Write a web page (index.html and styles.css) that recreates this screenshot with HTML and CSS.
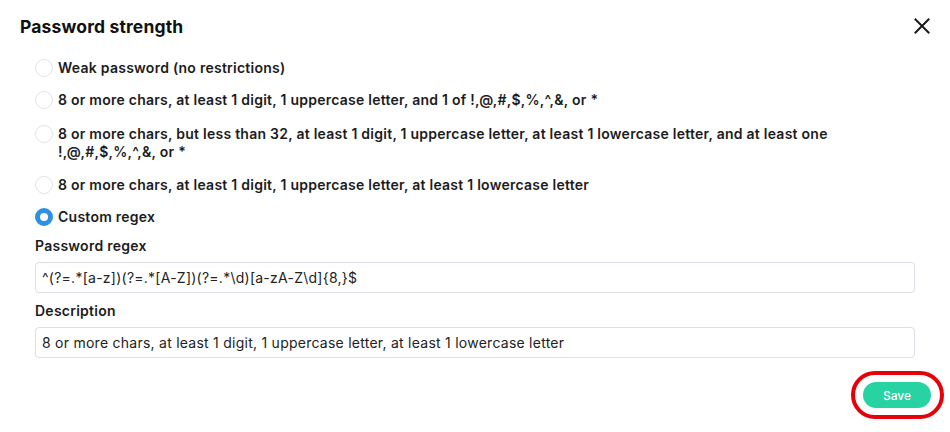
FILE: index.html
```html
<!DOCTYPE html>
<html>
<head>
<meta charset="utf-8">
<link rel="stylesheet" href="styles.css">
</head>
<body>
<div class="dialog">
  <div class="header">
    <h1 class="title">Password strength</h1>
    <button class="close" aria-label="Close">
      <svg width="16" height="16" viewBox="0 0 16 16"><path d="M1.5 1.5 L14.5 14.5 M14.5 1.5 L1.5 14.5" stroke="#1a1a1a" stroke-width="2" stroke-linecap="square"/></svg>
    </button>
  </div>
  <div class="options">
    <label class="option"><span class="radio"></span><span class="text">Weak password (no restrictions)</span></label>
    <label class="option"><span class="radio"></span><span class="text">8 or more chars, at least 1 digit, 1 uppercase letter, and 1 of !,@,#,$,%,^,&amp;, or *</span></label>
    <label class="option multi"><span class="radio"></span><span class="text">8 or more chars, but less than 32, at least 1 digit, 1 uppercase letter, at least 1 lowercase letter, and at least one !,@,#,$,%,^,&amp;, or *</span></label>
    <label class="option"><span class="radio"></span><span class="text">8 or more chars, at least 1 digit, 1 uppercase letter, at least 1 lowercase letter</span></label>
    <label class="option"><span class="radio checked"></span><span class="text">Custom regex</span></label>
  </div>
  <div class="fields">
    <div class="field">
      <div class="field-label">Password regex</div>
      <div class="input">^(?=.*[a-z])(?=.*[A-Z])(?=.*\d)[a-zA-Z\d]{8,}$</div>
    </div>
    <div class="field">
      <div class="field-label">Description</div>
      <div class="input">8 or more chars, at least 1 digit, 1 uppercase letter, at least 1 lowercase letter</div>
    </div>
  </div>
  <div class="footer">
    <div class="save-wrap">
      <button class="save">Save</button>
      <span class="highlight"></span>
    </div>
  </div>
</div>
</body>
</html>
```

FILE: styles.css
```css
* { box-sizing: border-box; }
html, body {
  margin: 0;
  padding: 0;
  background: #ffffff;
}
body {
  font-family: "Inter", "Open Sans", sans-serif;
  color: #1a1a1a;
}
.dialog {
  width: 950px;
  height: 432px;
  padding: 0 35px 0 35px;
}
.header {
  display: flex;
  justify-content: space-between;
  align-items: center;
  height: 52px;
  margin: 0 0 0 -15px;
}
.title {
  margin: 0;
  font-size: 17.5px;
  font-weight: 700;
  letter-spacing: 0.15px;
  color: #111;
}
.close {
  border: none;
  background: none;
  padding: 0;
  width: 16px;
  height: 16px;
  margin-right: -15px;
  display: flex;
}
.options {
  display: flex;
  flex-direction: column;
  gap: 14px;
  margin-top: 7px;
}
.option {
  display: flex;
  align-items: flex-start;
  gap: 5px;
  font-size: 14px;
  font-weight: 600;
  letter-spacing: 0.25px;
  line-height: 18px;
  color: #1c1c1c;
}
.option.multi {
  margin-top: 2px;
  margin-bottom: 1px;
}
.radio {
  flex: none;
  width: 18px;
  height: 18px;
  border-radius: 50%;
  border: 1px solid #e3e3ea;
  background: #fff;
}
.radio.checked {
  border: 5.5px solid #2e90e3;
  background: #fff;
}
.fields {
  display: flex;
  flex-direction: column;
  gap: 9px;
  margin-top: 11px;
}
.field-label {
  font-size: 14px;
  font-weight: 600;
  letter-spacing: 0.25px;
  line-height: 18px;
  margin-bottom: 7px;
  color: #1c1c1c;
}
.input {
  height: 31px;
  border: 1px solid #dedde8;
  border-radius: 4px;
  padding: 0 6px;
  display: flex;
  align-items: center;
  font-size: 14px;
  letter-spacing: 0.25px;
  font-weight: 400;
  color: #222;
}
.footer {
  display: flex;
  justify-content: flex-end;
  margin-top: 24px;
  margin-right: -16px;
}
.save-wrap {
  position: relative;
}
.save {
  width: 68px;
  height: 26px;
  border: none;
  border-radius: 13px;
  background: #27d3a2;
  color: #fff;
  font-family: "Inter", sans-serif;
  font-size: 12px;
  font-weight: 500;
  display: block;
}
.highlight {
  position: absolute;
  left: -12px;
  top: -11px;
  width: 93px;
  height: 48px;
  border: 4.5px solid #e6000a;
  border-radius: 24px;
}
```
